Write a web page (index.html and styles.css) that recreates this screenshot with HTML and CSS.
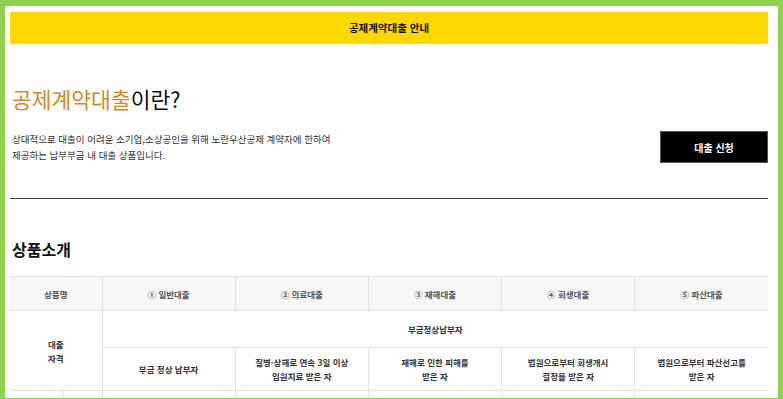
FILE: index.html
```html
<!DOCTYPE html>
<html lang="ko">
<head>
<meta charset="utf-8">
<title>공제계약대출 안내</title>
<link rel="stylesheet" href="styles.css">
</head>
<body>
<div class="frame">
  <div class="topbar">공제계약대출 안내</div>
  <h1 class="title"><span class="accent">공제계약대출</span>이란?</h1>
  <div class="intro">
    <p class="desc">상대적으로 대출이 어려운 소기업,소상공인을 위해 노란우산공제 계약자에 한하여<br>제공하는 납부부금 내 대출 상품입니다.</p>
    <a class="apply">대출 신청</a>
  </div>
  <hr class="divider">
  <h2 class="section">상품소개</h2>
  <table class="products">
    <colgroup>
      <col class="c-a"><col class="c-b"><col><col><col><col><col>
    </colgroup>
    <tr class="head">
      <th colspan="2">상품명</th>
      <th>① 일반대출</th>
      <th>② 의료대출</th>
      <th>③ 재해대출</th>
      <th>④ 회생대출</th>
      <th>⑤ 파산대출</th>
    </tr>
    <tr class="r1">
      <td class="label" colspan="2" rowspan="2">대출<br>자격</td>
      <td colspan="5">부금정상납부자</td>
    </tr>
    <tr class="r2">
      <td>부금 정상 납부자</td>
      <td>질병·상해로 연속 3일 이상<br>입원치료 받은 자</td>
      <td>재해로 인한 피해를<br>받은 자</td>
      <td>법원으로부터 회생개시<br>결정을 받은 자</td>
      <td>법원으로부터 파산선고를<br>받은 자</td>
    </tr>
    <tr class="r3">
      <td></td><td></td><td></td><td></td><td></td><td></td><td></td>
    </tr>
  </table>
</div>
</body>
</html>
```
FILE: styles.css
```css
html, body {
  margin: 0;
  padding: 0;
}
body {
  background: #92d050;
  font-family: "Noto Sans CJK KR", "Noto Sans", sans-serif;
  color: #222;
  padding: 6px 5px 0 5px;
}
.frame {
  background: #fff;
  height: 386px;
  overflow: hidden;
  padding: 6px 10px 0 5px;
}
.topbar {
  background: #fcd800;
  height: 32px;
  line-height: 32px;
  text-align: center;
  font-size: 10.5px;
  font-weight: bold;
  color: #111;
}
.title {
  margin: 41px 0 0 2px;
  font-size: 21.5px;
  line-height: 28px;
  font-weight: normal;
  color: #111;
}
.accent {
  color: #d4891e;
}
.intro {
  margin-top: 18px;
  display: flex;
  align-items: center;
  justify-content: space-between;
}
.desc {
  margin: 0 0 0 2px;
  font-size: 9.5px;
  line-height: 16px;
  color: #333;
}
.apply {
  width: 106px;
  height: 30px;
  background: #000;
  border: 1px solid #555;
  color: #fff;
  font-size: 10px;
  font-weight: bold;
  display: flex;
  align-items: center;
  justify-content: center;
}
.divider {
  margin: 35px 0 0 0;
  border: 0;
  border-top: 1px solid #444;
  height: 0;
}
.section {
  margin: 40px 0 0 2px;
  font-size: 16px;
  line-height: 20px;
  font-weight: bold;
  color: #111;
}
.products {
  margin-top: 17px;
  width: 100%;
  border-collapse: collapse;
  table-layout: fixed;
  font-size: 8.5px;
  line-height: 14px;
  text-align: center;
}
.products .c-a { width: 53px; }
.products .c-b { width: 39px; }
.products th, .products td {
  border: 1px solid #e2e2e2;
  padding: 0;
}
.products tr > :first-child { border-left: 0; }
.products tr > :last-child { border-right: 0; }
.products .r2 > :first-child { border-left: 1px solid #e2e2e2; }
.products th {
  background: #f7f7f7;
  color: #555;
  font-weight: bold;
  height: 33px;
}
.products td {
  color: #333;
  font-weight: bold;
}
.products .r1 td { height: 36px; }
.products .r2 td { height: 42px; }
.products .r3 td { height: 36px; }
```
